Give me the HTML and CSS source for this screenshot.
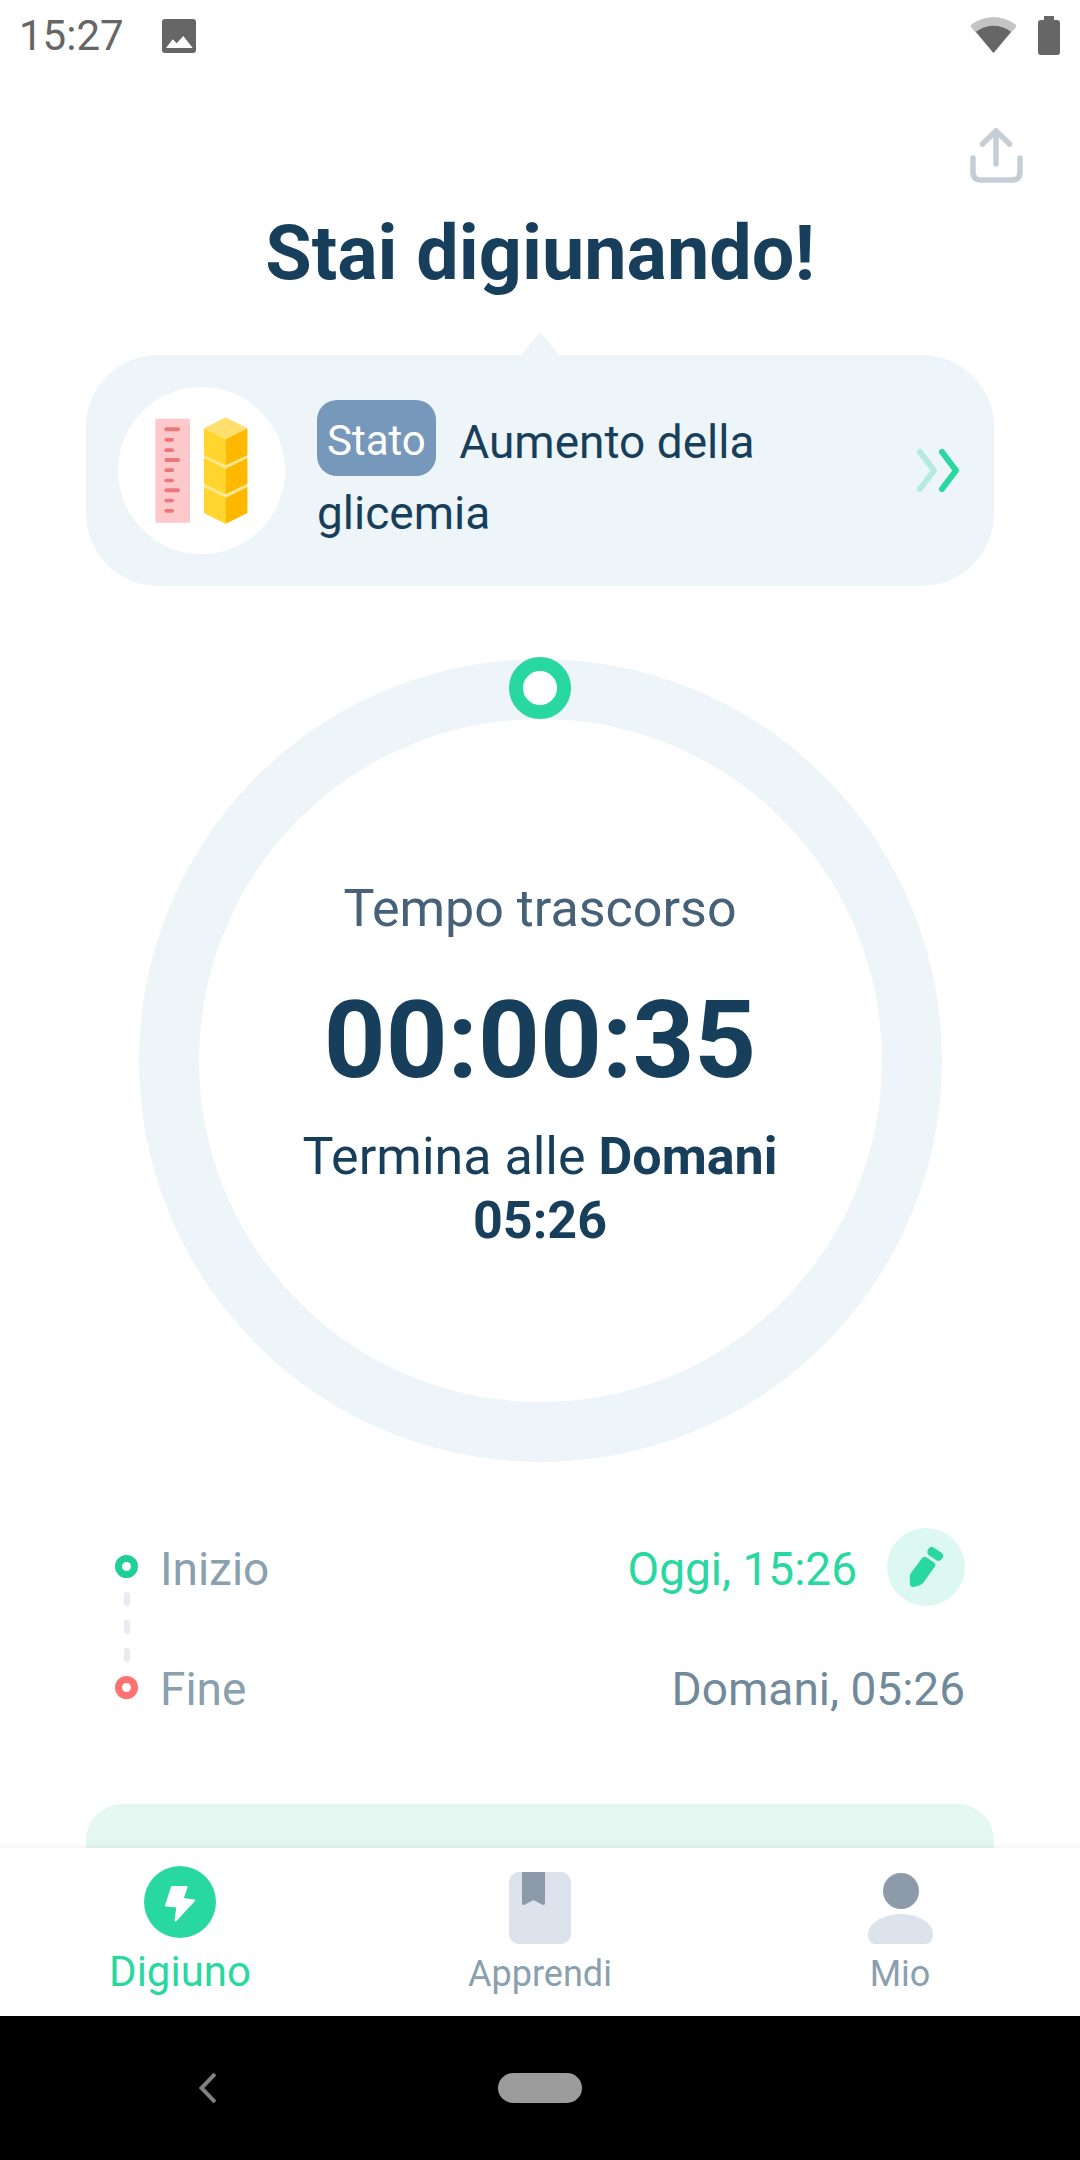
FILE: index.html
```html
<!DOCTYPE html>
<html lang="it">
<head>
<meta charset="utf-8">
<title>Digiuno</title>
<link rel="stylesheet" href="styles.css">
</head>
<body>
<div class="phone">
  <header class="status">
    <div class="status-left">
      <span class="clock">15:27</span>
      <svg class="ic-image" viewBox="162 18 34 34"><rect x="162" y="18" width="34" height="34" rx="3" fill="#666"/><path d="M166 47L172.700 38.300L176.700 42.300L183.300 35L192.700 47Z" fill="#fff"/></svg>
    </div>
    <div class="status-right">
      <svg class="ic-wifi" viewBox="970 16 47 38"><path d="M993.500 53L971 27Q970 25.500 972 24Q993.500 10 1015 24Q1017 25.500 1016 27Z" fill="#c4c4c4"/><path d="M993.500 53L976 31.700Q993.500 20 1011 31.700Z" fill="#666"/></svg>
      <svg class="ic-battery" viewBox="1038 16 22 39"><path d="M1044 16H1054V20H1057Q1060 20 1060 23V52Q1060 55 1057 55H1041Q1038 55 1038 52V23Q1038 20 1041 20H1044Z" fill="#666"/></svg>
    </div>
  </header>

  <main class="main">
    <div class="share-row">
      <svg class="ic-share" viewBox="970 128 53 55" fill="none" stroke="#c5ced6" stroke-width="5.500" stroke-linecap="round" stroke-linejoin="round"><path d="M996 131V164"/><path d="M982.500 144L996 131L1009.500 144"/><path d="M973 158V172Q973 180 981 180H1012Q1020 180 1020 172V158"/></svg>
    </div>
    <h1 class="title">Stai digiunando!</h1>

    <section class="state-card">
      <span class="pointer"></span>
      <div class="avatar">
        <svg class="avatar-art" viewBox="114 170 501 501">
          <rect x="226" y="265" width="104" height="312" rx="3" fill="#ffc9cc"/>
          <g fill="#ec7678">
            <rect x="253" y="291" width="47" height="12" rx="6"/><rect x="253" y="323" width="29" height="11" rx="5.500"/><rect x="253" y="354" width="29" height="11" rx="5.500"/>
            <rect x="253" y="383" width="47" height="12" rx="6"/><rect x="253" y="414" width="29" height="11" rx="5.500"/><rect x="253" y="445" width="29" height="11" rx="5.500"/>
            <rect x="253" y="474" width="47" height="12" rx="6"/><rect x="253" y="505" width="29" height="11" rx="5.500"/><rect x="253" y="536" width="29" height="11" rx="5.500"/>
          </g>
          <path d="M372 294L437 326L502 294V548L437 580L372 548Z" fill="#ffe98f"/>
          <path d="M372 470L437 502V580L372 548Z" fill="#ffd52e"/><path d="M437 502L502 470V548L437 580Z" fill="#ffb800"/>
          <path d="M372 383L437 415V492L372 460Z" fill="#ffd52e"/><path d="M437 415L502 383V460L437 492Z" fill="#ffb800"/>
          <path d="M372 294L437 326V405L372 375Z" fill="#ffd52e"/><path d="M437 326L502 294V375L437 405Z" fill="#ffb800"/>
          <path d="M437 261L502 294L437 326L372 294Z" fill="#ffe06e"/>
        </svg>
      </div>
      <p class="state-text"><span class="badge">Stato</span> Aumento della glicemia</p>
      <svg class="ic-chevrons" viewBox="917 449 42 43" fill="none" stroke-width="6" stroke-linecap="round" stroke-linejoin="round"><path d="M920 452L934 470.500L920 489" stroke="#b5ebdd"/><path d="M942 452L956 470.500L942 489" stroke="#29d8a1"/></svg>
    </section>

    <section class="ring">
      <span class="ring-dot"></span>
      <p class="ring-label">Tempo trascorso</p>
      <p class="ring-time">00:00:35</p>
      <p class="ring-end">Termina alle <b>Domani 05:26</b></p>
    </section>

    <section class="times">
      <div class="rail">
        <span class="node node-start"></span>
        <span class="dash"></span><span class="dash"></span><span class="dash"></span>
        <span class="node node-end"></span>
      </div>
      <div class="time-rows">
        <div class="time-row">
          <span class="time-label">Inizio</span>
          <span class="time-value start">Oggi, 15:26</span>
          <span class="edit">
            <svg class="ic-pencil" viewBox="0 0 105 192"><path d="M58 42Q62 35 70 35L99 54Q105 60 102 68L94 76Q88 80 82 76L58 59Q52 52 58 42Z" fill="#29d8a1"/><path d="M40 68Q45 63 52 67L76 83Q82 88 78 94L44 142Q40 148 32 151L14 156Q4 158 3 148L2 124Q3 118 6 114Z" fill="#29d8a1"/></svg>
          </span>
        </div>
        <div class="time-row">
          <span class="time-label">Fine</span>
          <span class="time-value end">Domani, 05:26</span>
        </div>
      </div>
    </section>

    <section class="promo"></section>
  </main>

  <nav class="tabs">
    <div class="tab active">
      <svg class="tab-icon" viewBox="144 1866 72 72"><circle cx="180" cy="1902" r="36" fill="#29d8a1"/><path d="M172 1887H186.500L182.500 1899L194 1900.500L175.500 1920.500L177.500 1906.500L166 1905.500Z" fill="#fff" stroke="#fff" stroke-width="2" stroke-linejoin="round"/></svg>
      <span class="tab-label">Digiuno</span>
    </div>
    <div class="tab">
      <svg class="tab-icon" viewBox="504 1866 72 78"><rect x="509" y="1872" width="62" height="72" rx="10" fill="#dce3ec"/><path d="M522 1872H545V1903Q545 1906 542 1904.500L533.500 1900L525 1904.500Q522 1906 522 1903Z" fill="#8d9aaa"/></svg>
      <span class="tab-label">Apprendi</span>
    </div>
    <div class="tab">
      <svg class="tab-icon" viewBox="865 1866 72 78"><circle cx="902" cy="1891" r="18" fill="#8d9aaa"/><path d="M869 1934C869 1923 885 1914 902 1914C919 1914 934 1923 934 1934Q934 1944 926 1944H877Q869 1944 869 1934Z" fill="#dce3ec"/></svg>
      <span class="tab-label">Mio</span>
    </div>
  </nav>

  <footer class="sysnav">
    <svg class="ic-back" viewBox="199 2073 17 30" fill="none" stroke="#808080" stroke-width="4"><path d="M215 2074L201.500 2088L215 2102"/></svg>
    <span class="home-pill"></span>
    <span class="nav-spacer"></span>
  </footer>
</div>
</body>
</html>
```
FILE: styles.css
```css
* { box-sizing: border-box; }
html, body { margin: 0; padding: 0; background: #fff; }
body { font-family: Roboto, "Noto Sans", sans-serif; }
p, h1 { margin: 0; }

.phone {
  width: 1080px;
  height: 2160px;
  display: flex;
  flex-direction: column;
  overflow: hidden;
  background: #fff;
}

/* status bar */
.status {
  height: 74px;
  flex: none;
  display: flex;
  justify-content: space-between;
  align-items: flex-start;
  padding: 16px 20px 0 19px;
}
.status-left { display: flex; align-items: center; gap: 38px; height: 40px; }
.clock { font-size: 42px; line-height: 40px; color: #666; }
.ic-image { width: 34px; height: 34px; }
.status-right { display: flex; align-items: flex-start; gap: 21px; }
.ic-wifi { width: 47px; height: 38px; }
.ic-battery { width: 22px; height: 39px; }

/* main */
.main {
  flex: 1;
  min-height: 0;
  overflow: hidden;
  padding: 0 86px;
  display: flex;
  flex-direction: column;
  align-items: stretch;
}
.share-row { display: flex; justify-content: flex-end; padding: 54px 0 0; margin-right: -29px; height: 109px; flex: none; }
.ic-share { width: 53px; height: 55px; }
.title {
  margin-top: 28px;
  text-align: center;
  font-size: 75.500px;
  line-height: 84px;
  font-weight: 700;
  color: #173f5c;
}

/* state card */
.state-card {
  position: relative;
  margin-top: 60px;
  height: 231px;
  flex: none;
  border-radius: 72px;
  background: #edf5f9;
  display: flex;
  align-items: center;
  padding: 0 35px 0 32px;
}
.pointer {
  position: absolute;
  left: 435px;
  top: -23px;
  width: 38px;
  height: 23px;
  background: #edf5f9;
  clip-path: polygon(50% 0, 100% 100%, 0 100%);
}
.avatar {
  width: 167px;
  height: 167px;
  flex: none;
  border-radius: 50%;
  background: #fff;
}
.avatar-art { display: block; width: 167px; height: 167px; }
.state-text {
  flex: 1;
  margin-left: 32px;
  padding-top: 14px;
  font-size: 46px;
  line-height: 71px;
  color: #173f5c;
}
.badge {
  display: inline-block;
  height: 76px;
  padding: 0 10px;
  margin: -6px 12px -6px 0;
  border-radius: 20px;
  background: #7598bb;
  color: #fff;
  font-size: 42px;
  line-height: 82px;
  vertical-align: 3px;
}
.ic-chevrons { width: 42px; height: 43px; flex: none; }

/* ring */
.ring {
  position: relative;
  margin: 73px auto 0;
  width: 803px;
  height: 803px;
  flex: none;
  border: 60px solid #edf5f9;
  border-radius: 50%;
  display: flex;
  flex-direction: column;
  align-items: center;
  text-align: center;
  padding-top: 162px;
}
.ring-dot {
  position: absolute;
  left: 310px;
  top: -62px;
  width: 62px;
  height: 62px;
  border: 14px solid #29d8a1;
  border-radius: 50%;
  background: #fff;
}
.ring-label { font-size: 52px; line-height: 56px; color: #466178; }
.ring-time { margin-top: 42px; font-size: 108px; line-height: 122px; font-weight: 700; color: #173f5c; }
.ring-end { margin-top: 24px; width: 500px; font-size: 52px; line-height: 64px; color: #173f5c; }

/* times */
.times {
  display: flex;
  flex: none;
  margin-top: 66px;
  padding: 0 0 0 29px;
}
.rail { width: 23px; display: flex; flex-direction: column; align-items: center; padding-top: 27px; }
.node { width: 23px; height: 23px; border-radius: 50%; border: 7px solid; flex: none; }
.node-start { border-color: #20cf97; }
.node-end { border-color: #ff7070; margin-top: 14px; }
.dash { width: 6px; height: 14px; border-radius: 3px; background: #e8ebf2; margin-top: 14px; flex: none; }
.time-rows { flex: 1; margin-left: 22px; display: flex; flex-direction: column; }
.time-row { display: flex; align-items: center; height: 78px; }
.time-row + .time-row { margin-top: 42px; padding-right: 29px; }
.time-label { flex: 1; font-size: 46px; color: #8aa0ae; padding-top: 4px; }
.time-value { font-size: 46px; padding-top: 4px; }
.start { color: #29d8a1; }
.end { color: #708a9c; }
.edit {
  width: 78px;
  height: 78px;
  margin: 0 29px 0 30px;
  border-radius: 50%;
  background: #ddf8f1;
  display: flex;
  align-items: center;
  justify-content: center;
}
.ic-pencil { width: 35px; height: 64px; }

.promo {
  flex: none;
  margin-top: 78px;
  height: 220px;
  border-radius: 36px 36px 0 0;
  background: #e4f7f1;
}

/* tabs */
.tabs {
  position: relative;
  flex: none;
  height: 168px;
  display: grid;
  grid-template-columns: repeat(3, 1fr);
  background: #fff;
  box-shadow: 0 -2px 8px rgba(0, 0, 0, .05);
}
.tab { display: flex; flex-direction: column; align-items: center; padding-top: 18px; }
.tab-icon { width: 72px; height: 78px; flex: none; }
.tab.active .tab-icon { height: 72px; }
.tab-label { font-size: 36px; line-height: 42px; color: #8aa0ae; margin-top: 9px; }
.tab.active .tab-label { font-size: 42px; line-height: 48px; margin-top: 10px; color: #29d8a1; }

/* system nav */
.sysnav {
  flex: none;
  height: 144px;
  background: #000;
  display: grid;
  grid-template-columns: 360px 360px 360px;
  align-items: center;
  justify-items: center;
}
.ic-back { width: 17px; height: 30px; margin-left: 54px; }
.home-pill { width: 84px; height: 30px; border-radius: 15px; background: #9b9b9b; }
```
